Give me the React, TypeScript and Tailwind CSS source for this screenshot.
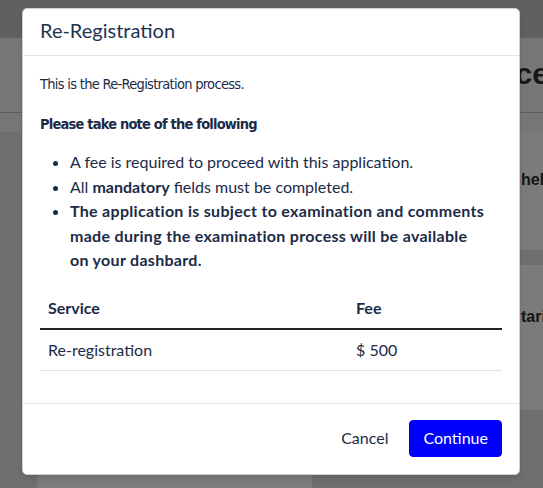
export default function App() {
  return (
    <div className="relative h-[488px] w-[543px] overflow-hidden bg-[#767678] font-['Liberation_Sans',sans-serif]">
      {/* page behind the dimmed overlay */}
      <div className="h-[38px] bg-[#5f6062]" />
      <div className="flex h-[75px] items-center justify-end border-b border-[#5c5c5e] pb-[4px]">
        <span className="-mr-[6px] whitespace-nowrap text-[30px] font-bold text-[#161616]">Service</span>
      </div>
      <div className="grid grid-cols-[37px_275px_14px_1fr] pt-[19px]">
        <div className="bg-[#6f6f71]" />
        <div className="h-[356px] bg-[#7b7b7c]" />
        <div className="bg-[#6f6f71]" />
        <div className="flex flex-col gap-[15px] bg-[#6f6f71]">
          <div className="flex h-[118px] items-start bg-[#7b7b7c] pl-[195px] pt-[36px]">
            <span className="whitespace-nowrap text-[16px] font-bold text-[#141414]">helpdesk</span>
          </div>
          <div className="flex h-[145px] items-start bg-[#7b7b7c] pl-[195px] pt-[40px]">
            <span className="whitespace-nowrap text-[16px] font-bold text-[#141414]">tariffs</span>
          </div>
        </div>
      </div>

      {/* modal */}
      <div className="absolute left-[22px] top-[8px] w-[498px] rounded-[5px] border border-[#cfcfd1] bg-white text-[#1b2b47] shadow-md">
        <div className="flex h-[47px] items-center border-b border-[#dee2e6] px-[17px] pb-[4px]">
          <h2 className="font-['Lato',sans-serif] text-[20px] font-normal text-[#1d3350]">Re-Registration</h2>
        </div>

        <div className="px-[17px] pb-[16px] pt-[17px]">
          <p className="mb-[18px] font-['DejaVu_Sans_Condensed','DejaVu_Sans',sans-serif] text-[14.5px] leading-[22px] tracking-[-0.7px] [font-stretch:condensed]">
            This is the Re-Registration process.
          </p>
          <p className="font-['DejaVu_Sans_Condensed','DejaVu_Sans',sans-serif] text-[14.5px] font-bold leading-[22px] tracking-[-0.8px] [font-stretch:condensed]">
            Please take note of the following
          </p>
          <ul className="mt-[15px] list-disc pl-[30px] pr-[16px] font-['Lato',sans-serif] text-[16px] leading-[24.5px]">
            <li>A fee is required to proceed with this application.</li>
            <li>
              All <b>mandatory</b> fields must be completed.
            </li>
            <li className="font-bold tracking-[0.3px]">
              The application is subject to examination and comments made during the examination process will be available on your dashbard.
            </li>
          </ul>

          <table className="mt-[15px] mb-[16px] w-full border-collapse font-['Lato',sans-serif] text-[16px] leading-[24px]">
            <thead>
              <tr className="border-b-2 border-[#212529]">
                <th className="w-[308px] p-[8px] text-left font-bold">Service</th>
                <th className="p-[8px] text-left font-bold">Fee</th>
              </tr>
            </thead>
            <tbody>
              <tr className="border-b border-[#dee2e6]">
                <td className="p-[8px]">Re-registration</td>
                <td className="p-[8px]">$ 500</td>
              </tr>
            </tbody>
          </table>
        </div>

        <div className="flex items-center justify-end gap-[21px] border-t border-[#dee2e6] px-[17px] pb-[17px] pt-[16px] font-['Lato',sans-serif] text-[16px]">
          <button className="text-[#1b2b47]">Cancel</button>
          <button className="h-[37px] rounded-[4px] border border-[#0000ff] bg-[#0000ff] px-[13px] text-white">Continue</button>
        </div>
      </div>
    </div>
  );
}
